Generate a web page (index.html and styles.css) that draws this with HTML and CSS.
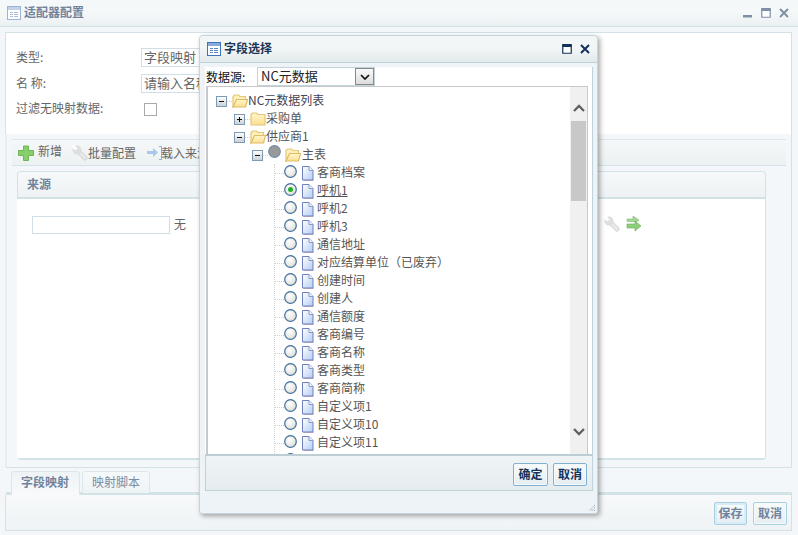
FILE: index.html
```html
<!DOCTYPE html>
<html lang="zh">
<head>
<meta charset="utf-8">
<title>适配器配置</title>
<link rel="stylesheet" href="styles.css">
</head>
<body>
<svg class="defs" width="0" height="0" aria-hidden="true">
  <defs>
    <linearGradient id="fold" x1="0" y1="0" x2="0" y2="1"><stop offset="0" stop-color="#fff6cc"/><stop offset="1" stop-color="#fbdf90"/></linearGradient>
    <linearGradient id="doc" x1="0" y1="0" x2="1" y2="1"><stop offset="0" stop-color="#ffffff"/><stop offset="1" stop-color="#b4cdf4"/></linearGradient>
    <radialGradient id="rad" cx=".4" cy=".35" r=".8"><stop offset="0" stop-color="#ffffff"/><stop offset="1" stop-color="#d8d8d0"/></radialGradient>
    <linearGradient id="tog" x1="0" y1="0" x2="0" y2="1"><stop offset="0" stop-color="#ffffff"/><stop offset="1" stop-color="#c9cfd4"/></linearGradient>
    <symbol id="i-grid" viewBox="0 0 14 14"><rect x=".5" y=".5" width="13" height="13" fill="#fff" stroke="currentColor"/><path d="M1 1h12v3H1z" fill="currentColor" opacity=".6"/><path d="M3 6.500h3M7 6.500h4M3 8.500h3M7 8.500h4M3 10.500h3M7 10.500h4" stroke="currentColor" stroke-width="1" opacity=".85"/></symbol>
    <symbol id="i-open" viewBox="0 0 16 14"><path d="M1 13V2.500L2.500 1h4L8 2.500h5.500V6H5L1 13z" fill="#fdf0b8" stroke="#e3c77c" stroke-width="1.200"/><path d="M1 13L4.500 5.500H15.500L13.500 13z" fill="url(#fold)" stroke="#dfbd66" stroke-width="1.200"/></symbol>
    <symbol id="i-closed" viewBox="0 0 16 14"><path d="M1 13V2.500L2.500 1h4L8 2.500h7V13z" fill="url(#fold)" stroke="#e3c77c" stroke-width="1.200"/></symbol>
    <symbol id="i-doc" viewBox="0 0 13 15"><path d="M1.500 .5h6.500l4 4v9.500H1.500z" fill="url(#doc)" stroke="#6f80bc"/><path d="M8 .5v4h4" fill="#eef3fc" stroke="#8b9bc8"/><path d="M2.500 14.500h10" stroke="#a09cc0"/></symbol>
    <symbol id="i-radio" viewBox="0 0 13 13"><circle cx="6.500" cy="6.500" r="5.800" fill="url(#rad)" stroke="#3f6f9f" stroke-width="1.200"/></symbol>
    <symbol id="i-radio-on" viewBox="0 0 13 13"><circle cx="6.500" cy="6.500" r="5.800" fill="url(#rad)" stroke="#3f6f9f" stroke-width="1.200"/><circle cx="6.500" cy="6.500" r="2.500" fill="#22b02c"/></symbol>
    <symbol id="i-radio-mix" viewBox="0 0 13 13"><circle cx="6.500" cy="6.500" r="5.800" fill="#999" stroke="#6f8cab" stroke-width="1.200"/></symbol>
    <symbol id="i-minus" viewBox="0 0 11 11"><rect x=".5" y=".5" width="10" height="10" fill="url(#tog)" stroke="#7d9ab5"/><path d="M3 5.500h5" stroke="#111"/></symbol>
    <symbol id="i-plus" viewBox="0 0 11 11"><rect x=".5" y=".5" width="10" height="10" fill="url(#tog)" stroke="#7d9ab5"/><path d="M3 5.500h5M5.500 3v5" stroke="#111"/></symbol>
    <symbol id="i-add" viewBox="0 0 16 16"><path d="M5.500 1h5v4.500H15.500v5H10.500V15.500h-5V10.500H.5v-5h5z" fill="#86cf6a" stroke="#6db358" stroke-linejoin="round"/></symbol>
    <symbol id="i-wrench" viewBox="0 0 16 16"><path d="M5.500 5.500L13 13" stroke="#d6d8da" stroke-width="5" stroke-linecap="round"/><path d="M5.500 5.500L13 13" stroke="#e6e8ea" stroke-width="3" stroke-linecap="round"/><circle cx="5" cy="5" r="4.500" fill="#dcdee0"/><path d="M1 1l3.500 3.500" stroke="#fff" stroke-width="3"/></symbol>
    <symbol id="i-load" viewBox="0 0 16 16"><path d="M0 6h6V3l5 4.500-5 4.500V9H0z" fill="#a9c8ec"/><path d="M12 1h3v14h-3v-1h2V2h-2z" fill="#8fb2de"/></symbol>
    <symbol id="i-go" viewBox="0 0 16 16"><path d="M1 3h6V0l6 4-2 1.500H1z" fill="#a4d894" stroke="#7fbb6f" stroke-width=".6"/><path d="M1 8h8V5l6 5-6 5v-3H1z" fill="#8ed07a" stroke="#6aa95a" stroke-width=".6"/></symbol>
    <symbol id="i-sel" viewBox="0 0 10 6"><path d="M1 1l4 4 4-4" fill="none" stroke="#111" stroke-width="1.700"/></symbol>
    <symbol id="i-max" viewBox="0 0 10 10"><path d="M.75.75h8.500v8.500H.75z" fill="#fff" stroke="currentColor" stroke-width="1.200"/><path d="M.5 0h9v3h-9z" fill="currentColor"/></symbol>
    <symbol id="i-close" viewBox="0 0 10 10"><path d="M1 1l8 8M9 1L1 9" stroke="currentColor" stroke-width="2"/></symbol>
    <symbol id="i-min" viewBox="0 0 10 10"><path d="M0 7h9v2.500H0z" fill="currentColor"/></symbol>
    <symbol id="i-up" viewBox="0 0 12 8"><path d="M1 7l5-5 5 5" fill="none" stroke="#606060" stroke-width="2.300"/></symbol>
    <symbol id="i-down" viewBox="0 0 12 8"><path d="M1 1l5 5 5-5" fill="none" stroke="#606060" stroke-width="2.300"/></symbol>
    <symbol id="i-grip" viewBox="0 0 8 8"><path d="M7 1L1 7M7 3.500L3.500 7M7 6L6 7" stroke="#8a9aa0" stroke-dasharray="1 1"/></symbol>
  </defs>
</svg>

<div class="window">
  <header class="titlebar">
    <svg class="title-icon"><use href="#i-grid"/></svg>
    <span class="title-text">适配器配置</span>
    <span class="win-tools">
      <svg class="tool"><use href="#i-min"/></svg>
      <svg class="tool"><use href="#i-max"/></svg>
      <svg class="tool"><use href="#i-close"/></svg>
    </span>
  </header>
  <main class="window-body">
    <section class="form-panel">
      <div class="form-row">
        <label class="form-label">类型:</label>
        <div class="text-field">字段映射</div>
      </div>
      <div class="form-row">
        <label class="form-label">名 称:</label>
        <div class="text-field">请输入名称</div>
      </div>
      <div class="form-row">
        <label class="form-label">过滤无映射数据:</label>
        <span class="check"></span>
      </div>
    </section>
    <section class="config">
      <div class="toolbar">
        <span class="tb-btn first"><svg class="ic16"><use href="#i-add"/></svg><span class="first-text">新增</span></span>
        <span class="tb-btn second"><svg class="ic16"><use href="#i-wrench"/></svg>批量配置</span>
        <span class="tb-btn third"><svg class="ic16 overlap"><use href="#i-load"/></svg>载入来源</span>
      </div>
      <div class="grid">
        <div class="grid-head">来源</div>
        <div class="grid-body">
          <div class="grid-cell-input"></div>
          <span class="grid-cell-text">无</span>
          <span class="grid-actions">
            <svg class="ic16"><use href="#i-wrench"/></svg>
            <svg class="ic16"><use href="#i-go"/></svg>
          </span>
        </div>
      </div>
    </section>
    <nav class="tabs">
      <span class="tab active">字段映射</span>
      <span class="tab">映射脚本</span>
    </nav>
    <footer class="actions">
      <button class="btn focus">保存</button>
      <button class="btn">取消</button>
    </footer>
  </main>
</div>

<div class="dialog">
  <header class="dlg-title">
    <svg class="title-icon dlg-icon"><use href="#i-grid"/></svg>
    <span class="dlg-title-text">字段选择</span>
    <span class="dlg-tools">
      <svg class="tool"><use href="#i-max"/></svg>
      <svg class="tool"><use href="#i-close"/></svg>
    </span>
  </header>
  <div class="dlg-panel">
    <div class="source-row">
      <span class="source-label">数据源:</span>
      <div class="select"><span class="select-text">NC元数据</span><span class="select-btn"><svg class="sel-ic"><use href="#i-sel"/></svg></span></div>
    </div>
    <div class="tree-box">
      <div class="tree">
        <div class="node lv0"><svg class="tg"><use href="#i-minus"/></svg><i class="dash"></i><svg class="fd"><use href="#i-open"/></svg><span class="lbl">NC元数据列表</span></div>
        <div class="node lv1"><svg class="tg"><use href="#i-plus"/></svg><i class="dash"></i><svg class="fd"><use href="#i-closed"/></svg><span class="lbl">采购单</span></div>
        <div class="node lv1"><svg class="tg"><use href="#i-minus"/></svg><i class="dash"></i><svg class="fd"><use href="#i-open"/></svg><span class="lbl">供应商1</span></div>
        <div class="node lv2"><svg class="tg"><use href="#i-minus"/></svg><i class="dash"></i><svg class="rd up"><use href="#i-radio-mix"/></svg><svg class="fd fd2"><use href="#i-open"/></svg><span class="lbl">主表</span></div>
        <div class="leaves">
          <div class="node leaf"><i class="branch"></i><svg class="rd"><use href="#i-radio"/></svg><svg class="dc"><use href="#i-doc"/></svg><span class="lbl">客商档案</span></div>
          <div class="node leaf"><i class="branch"></i><svg class="rd"><use href="#i-radio-on"/></svg><svg class="dc"><use href="#i-doc"/></svg><span class="lbl sel">呼机1</span></div>
          <div class="node leaf"><i class="branch"></i><svg class="rd"><use href="#i-radio"/></svg><svg class="dc"><use href="#i-doc"/></svg><span class="lbl">呼机2</span></div>
          <div class="node leaf"><i class="branch"></i><svg class="rd"><use href="#i-radio"/></svg><svg class="dc"><use href="#i-doc"/></svg><span class="lbl">呼机3</span></div>
          <div class="node leaf"><i class="branch"></i><svg class="rd"><use href="#i-radio"/></svg><svg class="dc"><use href="#i-doc"/></svg><span class="lbl">通信地址</span></div>
          <div class="node leaf"><i class="branch"></i><svg class="rd"><use href="#i-radio"/></svg><svg class="dc"><use href="#i-doc"/></svg><span class="lbl">对应结算单位（已废弃）</span></div>
          <div class="node leaf"><i class="branch"></i><svg class="rd"><use href="#i-radio"/></svg><svg class="dc"><use href="#i-doc"/></svg><span class="lbl">创建时间</span></div>
          <div class="node leaf"><i class="branch"></i><svg class="rd"><use href="#i-radio"/></svg><svg class="dc"><use href="#i-doc"/></svg><span class="lbl">创建人</span></div>
          <div class="node leaf"><i class="branch"></i><svg class="rd"><use href="#i-radio"/></svg><svg class="dc"><use href="#i-doc"/></svg><span class="lbl">通信额度</span></div>
          <div class="node leaf"><i class="branch"></i><svg class="rd"><use href="#i-radio"/></svg><svg class="dc"><use href="#i-doc"/></svg><span class="lbl">客商编号</span></div>
          <div class="node leaf"><i class="branch"></i><svg class="rd"><use href="#i-radio"/></svg><svg class="dc"><use href="#i-doc"/></svg><span class="lbl">客商名称</span></div>
          <div class="node leaf"><i class="branch"></i><svg class="rd"><use href="#i-radio"/></svg><svg class="dc"><use href="#i-doc"/></svg><span class="lbl">客商类型</span></div>
          <div class="node leaf"><i class="branch"></i><svg class="rd"><use href="#i-radio"/></svg><svg class="dc"><use href="#i-doc"/></svg><span class="lbl">客商简称</span></div>
          <div class="node leaf"><i class="branch"></i><svg class="rd"><use href="#i-radio"/></svg><svg class="dc"><use href="#i-doc"/></svg><span class="lbl">自定义项1</span></div>
          <div class="node leaf"><i class="branch"></i><svg class="rd"><use href="#i-radio"/></svg><svg class="dc"><use href="#i-doc"/></svg><span class="lbl">自定义项10</span></div>
          <div class="node leaf"><i class="branch"></i><svg class="rd"><use href="#i-radio"/></svg><svg class="dc"><use href="#i-doc"/></svg><span class="lbl">自定义项11</span></div>
          <div class="node leaf"><i class="branch"></i><svg class="rd"><use href="#i-radio"/></svg></div>
        </div>
      </div>
      <div class="scrollbar">
        <svg class="sb-arrow"><use href="#i-up"/></svg>
        <div class="sb-thumb"></div>
        <div class="sb-space"></div>
        <svg class="sb-arrow"><use href="#i-down"/></svg>
      </div>
    </div>
    <div class="dlg-footer">
      <button class="btn strong">确定</button>
      <button class="btn strong">取消</button>
    </div>
  </div>
  <svg class="grip"><use href="#i-grip"/></svg>
</div>
</body>
</html>
```
FILE: styles.css
```css
* { box-sizing: border-box; }
html, body { margin: 0; padding: 0; height: 535px; overflow: hidden; }
body { position: relative; background: #f3f7f9; font: 12px/18px "Noto Sans CJK SC", "Liberation Sans", sans-serif; color: #666; }
.defs { position: absolute; }

.window { height: 535px; display: flex; flex-direction: column; }
.titlebar { height: 27px; flex: none; display: flex; align-items: center; padding: 0 7px; background: linear-gradient(#f5f8f9, #f5f8f9 50%, #ebf0f2); border-bottom: 1px solid #d3e2e7; }
.title-icon { width: 14px; height: 14px; color: #9db4d8; flex: none; }
.title-text { margin-left: 3px; padding-bottom: 3px; font-weight: 700; color: #71839c; }
.win-tools { margin-left: auto; display: flex; gap: 8px; color: #7f90a5; margin-right: 2px; }
.tool { width: 10px; height: 10px; }

.window-body { flex: 1; display: flex; flex-direction: column; padding: 5px 6px 4px 5px; min-height: 0; }
.form-panel { height: 102px; flex: none; background: #fff; border: 1px solid #d3e2e7; border-bottom: 0; padding: 12px 0 0 10px; }
.form-row { height: 25px; display: flex; align-items: center; }
.form-row:nth-child(2) { height: 26px; }
.form-row:nth-child(3) { height: 26px; }
.form-label { width: 125px; flex: none; padding-bottom: 2px; }
.form-row:nth-child(2) .form-label { padding-bottom: 0; }
.text-field { width: 200px; height: 19px; border: 1px solid #cfdfe5; padding: 0 2px; font-size: 13px; line-height: 15px; }
.check { width: 13px; height: 13px; border: 1px solid #aaa; margin: 0 0 0 3px; background: #fff; }

.config { flex: 1; min-height: 0; display: flex; flex-direction: column; padding: 5px 5px 7px 5px; border-left: 2px solid #e6f0f2; border-right: 1px solid #d3e2e7; }
.toolbar { height: 27px; flex: none; display: flex; align-items: center; background: linear-gradient(#f5f8f9, #ecf1f2); border-top: 1px solid #dbe7ea; border-bottom: 1px solid #d3e2e7; }
.tb-btn { display: flex; align-items: center; white-space: nowrap; }
.first { margin-left: 6px; gap: 4px; }
.first-text { margin-top: -4px; }
.second { margin-left: 10px; }
.third { margin-left: 11px; }
.ic16 { width: 16px; height: 16px; flex: none; }
.overlap { margin-right: -2px; }
.grid { flex: 1; display: flex; flex-direction: column; margin: 5px 20px 0 5px; border-right: 1px solid #d3e2e7; border-bottom: 2px solid #d3e2e7; border-radius: 4px; min-height: 0; }
.grid-head { height: 28px; flex: none; padding-left: 9px; line-height: 23px; font-weight: 700; color: #71839c; background: linear-gradient(#f6f9fa, #eef2f4); border-top: 1px solid #d3e2e7; border-left: 1px solid #d3e2e7; border-bottom: 2px solid #d3e2e7; border-radius: 4px 4px 0 0; }
.grid-body { flex: 1; background: #fff; display: flex; align-items: flex-start; padding: 17px 0 0 15px; }
.grid-cell-input { width: 138px; height: 18px; border: 1px solid #cfdfe5; flex: none; }
.grid-cell-text { margin-left: 4px; line-height: 16px; }
.grid-actions { margin-left: auto; margin-right: 123px; display: flex; gap: 6px; }

.tabs { height: 28px; flex: none; display: flex; gap: 2px; padding: 3px 0 0 5px; margin-left: 1px; border-top: 1px solid #d3e2e7; border-bottom: 3px solid #d3e2e7; }
.tab { height: 22px; padding: 0 9px; border: 1px solid #dbe7ea; border-bottom: 0; border-radius: 3px 3px 0 0; line-height: 19px; color: #7b8ca3; background: linear-gradient(#f6f9fa, #eef3f5); }
.tab.active { width: 69px; font-weight: 700; color: #71839c; height: 24px; background: linear-gradient(#eef3f5, #f8fafb); }
.actions { height: 36px; flex: none; display: flex; justify-content: flex-end; align-items: flex-start; gap: 6px; padding: 7px 4px 0 0; border: 1px solid #d3e2e7; border-top: 0; background: linear-gradient(#f7f9fa, #eff3f5); }
.btn { width: 34px; height: 23px; padding: 0 0 3px; border: 1px solid #a9cfe2; border-radius: 2px; font: 700 12px/17px "Noto Sans CJK SC", sans-serif; color: #71839c; background: linear-gradient(#f8fbfc, #e6eef2); box-shadow: inset 0 0 0 1px #f4fafc; }
.btn.focus { width: 33px; box-shadow: inset 0 0 0 2px #d8edf6; }
.btn.strong { width: 35px; color: #15325a; border-color: #7fb2d2; }
.btn.strong + .btn.strong { width: 34px; }

.dialog { position: absolute; left: 199px; top: 35px; width: 399px; height: 479px; background: #edf3f6; border: 1px solid #c5d5db; border-radius: 4px 4px 3px 3px; box-shadow: 2px 2px 5px rgba(0, 0, 0, .35); display: flex; flex-direction: column; }
.dlg-title { height: 27px; flex: none; display: flex; align-items: center; padding: 0 7px; background: linear-gradient(#f2f6f7, #f2f6f7 45%, #e3eaec); border-bottom: 1px solid #bfd3db; border-radius: 4px 4px 0 0; }
.dlg-icon { color: #3d73bd; }
.dlg-title-text { margin-left: 3px; padding-bottom: 3px; font-weight: 700; color: #1b3558; }
.dlg-tools { margin-left: auto; display: flex; gap: 8px; color: #14315a; }
.dlg-panel { margin: 4px 5px 0 5px; width: 388px; height: 424px; display: flex; flex-direction: column; background: #fff; border-right: 1px solid #bcd3dc; }
.source-row { height: 19px; flex: none; display: flex; align-items: center; color: #111; }
.source-label { width: 52px; padding-left: 1px; flex: none; }
.select { width: 118px; height: 19px; display: flex; border: 1px solid #c3d3da; background: #fff; }
.select-text { flex: 1; padding: 0 0 1px 3px; font-size: 13px; line-height: 15px; color: #222; }
.select-btn { width: 19px; display: flex; align-items: center; justify-content: center; border: 1px solid #888; background: linear-gradient(#fafafa, #dcdcdc); }
.sel-ic { width: 10px; height: 6px; }
.tree-box { margin-left: 1px; width: 382px; height: 368px; flex: none; display: flex; border: 1px solid #c8c8c8; border-left-width: 2px; border-bottom: 0; overflow: hidden; }
.tree { flex: 1; min-width: 0; padding-top: 5px; overflow: hidden; color: #555; }
.node { height: 18px; display: flex; align-items: center; white-space: nowrap; }
.lv0 { padding-left: 8px; }
.lv1 { padding-left: 26px; }
.lv2 { padding-left: 44px; }
.tg { width: 11px; height: 11px; flex: none; }
.dash { width: 5px; border-bottom: 1px dotted #d0d0d0; flex: none; }
.fd { width: 16px; height: 14px; flex: none; }
.fd2 { margin-left: 4px; margin-right: 1px; }
.rd { width: 13px; height: 13px; flex: none; margin-top: -4px; }
.rd.up { margin-top: -7px; }
.dc { width: 13px; height: 15px; flex: none; margin-left: 4px; margin-right: 3px; }
.lbl { line-height: 18px; margin-top: -2px; }
.sel { text-decoration: underline; }
.lv0 .lbl { color: #445; }
.leaves { margin-left: 66px; border-left: 1px dotted #d0d0d0; }
.branch { width: 9px; border-bottom: 1px dotted #d0d0d0; flex: none; }
.scrollbar { width: 17px; flex: none; background: #f0f0f0; display: flex; flex-direction: column; align-items: center; padding-top: 17px; }
.sb-arrow { width: 12px; height: 8px; flex: none; }
.sb-thumb { width: 15px; height: 80px; margin-top: 9px; background: #c8c8c8; flex: none; }
.sb-space { flex: 1; }
.scrollbar .sb-arrow:last-child { margin-bottom: 18px; }
.dlg-footer { height: 37px; flex: none; width: 387px; display: flex; justify-content: flex-end; align-items: flex-start; gap: 5px; padding: 7px 5px 0 0; background: linear-gradient(#eff4f6, #e5ecef); border-top: 2px solid #bccdd4; border-left: 1px solid #bcd3dc; border-bottom: 1px solid #bcd3dc; }
.grip { position: absolute; right: 1px; bottom: 1px; width: 8px; height: 8px; }
```
